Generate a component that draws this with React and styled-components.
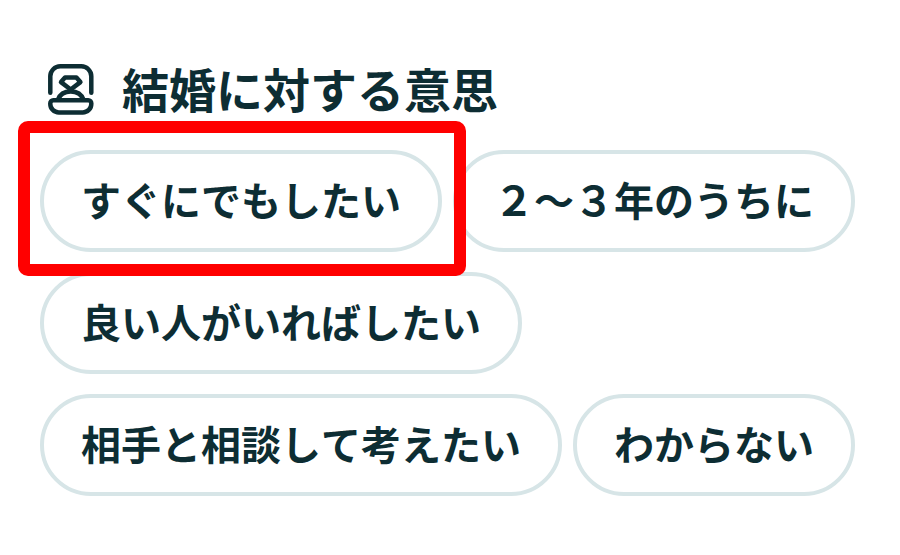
import React, { useState } from "react";
import styled, { createGlobalStyle } from "styled-components";

const GlobalStyle = createGlobalStyle`
  * {
    box-sizing: border-box;
  }

  body {
    margin: 0;
    background-color: #ffffff;
    color: #0d2d33;
    font-family: "Noto Sans CJK JP", sans-serif;
    font-kerning: none;
  }
`;

const Section = styled.section`
  padding: 60px 40px;
`;

const Header = styled.div`
  display: flex;
  align-items: center;
  gap: 28px;
  height: 60px;
  padding-left: 8px;
`;

const Title = styled.h2`
  margin: 0;
  padding-bottom: 4px;
  font-size: 47px;
  line-height: 56px;
  font-weight: 700;
`;

const Options = styled.div`
  display: flex;
  flex-wrap: wrap;
  gap: 20px 11px;
  margin-top: 30px;
`;

const Option = styled.div`
  position: relative;
  display: flex;
`;

const Pill = styled.button`
  height: 102px;
  padding: 0 37px 4px;
  border: 4px solid #d7e5e7;
  border-radius: 51px;
  background-color: #ffffff;
  color: inherit;
  font-family: inherit;
  font-size: 40px;
  line-height: 60px;
  font-weight: 700;
  font-kerning: inherit;
  white-space: nowrap;
  cursor: pointer;
`;

const Highlight = styled.span`
  position: absolute;
  z-index: 1;
  inset: -29px -24px -24px -22px;
  border: 12px solid #ff0000;
  border-radius: 10px;
  pointer-events: none;
`;

const RingBoxIcon = () => (
  <svg
    width="46"
    height="52"
    viewBox="0 0 46 52"
    fill="none"
    stroke="#0d2d33"
    strokeWidth="4.5"
    strokeLinecap="round"
    strokeLinejoin="round"
    aria-hidden="true"
  >
    <path d="M2.3 28.8V12.3a10 10 0 0 1 10-10h21a10 10 0 0 1 10 10v16.5" />
    <path d="M5.3 36.3h35a3 3 0 0 1 3 3v.6a8.5 8.5 0 0 1-8.5 8.5h-24a8.5 8.5 0 0 1-8.5-8.5v-.6a3 3 0 0 1 3-3z" />
    <path d="M10 35.5c1.8-4.8 6.6-8 12.7-8s10.9 3.2 12.7 8" />
    <path d="M17 13.5h11.4l4 4.6-9.7 7.4-9.7-7.4z" />
  </svg>
);

const options = [
  "すぐにでもしたい",
  "２〜３年のうちに",
  "良い人がいればしたい",
  "相手と相談して考えたい",
  "わからない",
];

const App = () => {
  const [marked, setMarked] = useState(options[0]);

  return (
    <>
      <GlobalStyle />
      <Section>
        <Header>
          <RingBoxIcon />
          <Title>結婚に対する意思</Title>
        </Header>
        <Options>
          {options.map((label) => (
            <Option key={label}>
              <Pill type="button" onClick={() => setMarked(label)}>
                {label}
              </Pill>
              {marked === label && <Highlight />}
            </Option>
          ))}
        </Options>
      </Section>
    </>
  );
};

export default App;
